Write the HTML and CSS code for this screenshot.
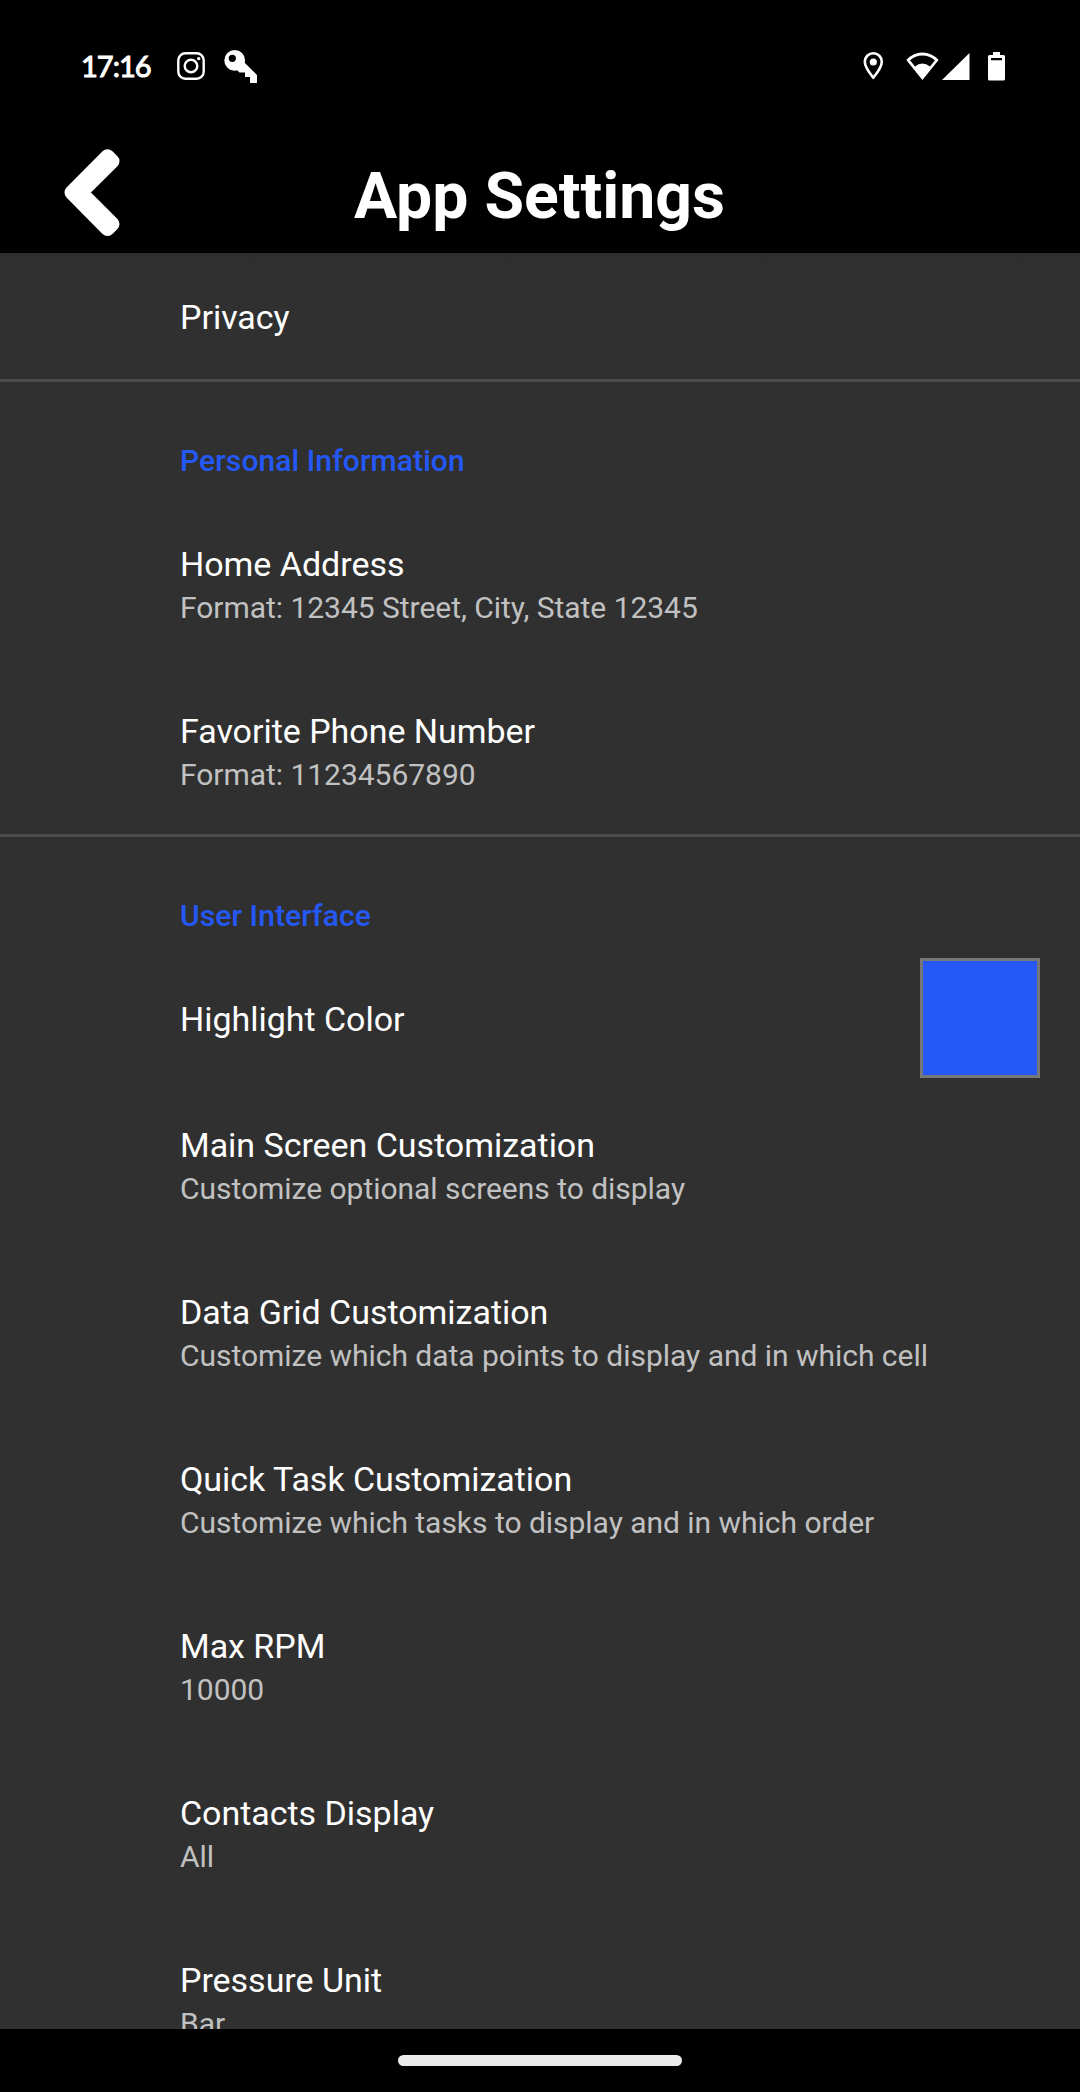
FILE: index.html
```html
<!DOCTYPE html>
<html lang="en">
<head>
<meta charset="utf-8">
<title>App Settings</title>
<link rel="stylesheet" href="styles.css">
</head>
<body>
<div class="screen">
  <div class="status">
    <span class="clock">17:16</span>
    <svg class="notifications" width="86" height="40" viewBox="0 0 86 40">
      <rect x="4.300" y="6.300" width="25.400" height="25.400" rx="7" fill="none" stroke="#fff" stroke-width="2.400"/>
      <circle cx="17" cy="19" r="6.300" fill="none" stroke="#fff" stroke-width="2.400"/>
      <circle cx="24.700" cy="11.600" r="1.700" fill="#fff"/>
      <path fill="#fff" fill-rule="evenodd" d="M60.700 3a10.400 10.400 0 1 0 0 20.800a10.400 10.400 0 1 0 0-20.800zM58.300 7.700a3.600 3.600 0 1 0 0 7.200a3.600 3.600 0 0 0 0-7.200z"/>
      <path fill="#fff" d="M69.500 14.500L83 28V36h-7v-6h-5V25.500h-5.500L61 21z"/>
    </svg>
    <svg class="system" width="146" height="40" viewBox="0 0 146 40">
      <path fill="none" stroke="#fff" stroke-width="2.600" stroke-linejoin="round" d="M13.300 6.300a8.500 8.500 0 0 0-8.500 8.500c0 5.500 8.500 16 8.500 16s8.500-10.500 8.500-16a8.500 8.500 0 0 0-8.500-8.500z"/>
      <circle cx="13.300" cy="15" r="3.600" fill="#fff"/>
      <path fill="#fff" fill-rule="evenodd" d="M46.300 13Q53 5.500 62.400 5.500T78.600 13L62.400 33zM50 13.300L55 19.500Q58.500 16.600 62.400 16.600T70 19.500L75 13.300Q69.500 8.400 62.400 8.400T50 13.300z"/>
      <path fill="#fff" d="M109.500 6V33H82z"/>
      <path fill="#fff" fill-rule="evenodd" d="M133 5h7v3h3.500q1.500 0 1.500 1.500v22.500q0 1.500-1.500 1.500h-14q-1.500 0-1.500-1.500v-22.500q0-1.500 1.500-1.500h3.500zM131 11v2.300h11V11z"/>
    </svg>
  </div>
  <header class="bar">
    <svg class="back" width="60" height="92" viewBox="62 147 60 92">
      <path fill="#fff" stroke="#fff" stroke-width="14" stroke-linejoin="round" d="M71.500 192.500L107.500 156.200L112.500 161.200L81 192.500L112.500 224L107.500 229z"/>
    </svg>
    <h1 class="heading">App Settings</h1>
  </header>
  <main class="list">
    <section class="group">
      <div class="item"><div class="title">Privacy</div></div>
    </section>
    <section class="group">
      <h2 class="category">Personal Information</h2>
      <div class="item"><div class="title">Home Address</div><div class="summary">Format: 12345 Street, City, State 12345</div></div>
      <div class="item"><div class="title">Favorite Phone Number</div><div class="summary">Format: 11234567890</div></div>
    </section>
    <section class="group">
      <h2 class="category">User Interface</h2>
      <div class="item with-swatch"><div class="title">Highlight Color</div><div class="swatch"></div></div>
      <div class="item"><div class="title">Main Screen Customization</div><div class="summary">Customize optional screens to display</div></div>
      <div class="item"><div class="title">Data Grid Customization</div><div class="summary">Customize which data points to display and in which cell</div></div>
      <div class="item"><div class="title">Quick Task Customization</div><div class="summary">Customize which tasks to display and in which order</div></div>
      <div class="item"><div class="title">Max RPM</div><div class="summary">10000</div></div>
      <div class="item"><div class="title">Contacts Display</div><div class="summary">All</div></div>
      <div class="item"><div class="title">Pressure Unit</div><div class="summary">Bar</div></div>
    </section>
  </main>
  <footer class="nav"><div class="handle"></div></footer>
</div>
</body>
</html>
```
FILE: styles.css
```css
* { box-sizing: border-box; }
body { margin: 0; background: #000; color: #fff; font-family: Roboto, sans-serif; }
.screen { width: 1080px; height: 2092px; display: flex; flex-direction: column; overflow: hidden; }

.status { height: 133px; flex: none; display: flex; align-items: flex-start; padding: 47px 74px 0 81px; }
.clock { width: 93px; font: 400 29px/38px Lato, sans-serif; letter-spacing: -1px; -webkit-text-stroke: 1px #fff; }
.system { margin-left: auto; }

.bar { height: 120px; flex: none; display: grid; grid-template-columns: 122px 1fr 122px; align-items: start; }
.back { margin: 14px 0 0 62px; }
.heading { margin: 26px 1px 0 0; font-size: 64.3px; line-height: 75px; font-weight: 700; text-align: center; }

.list { flex: 1; min-height: 0; overflow: hidden; background: linear-gradient(#2d2d2d, #303030 12px); }
.group + .group { border-top: 3px solid #4b4b4b; }
.category { margin: 0; height: 118px; padding: 61px 0 0 180px; font-size: 30px; line-height: 36px; font-weight: 500; letter-spacing: 0.08px; color: #2459f7; }
.item { padding: 44px 40px 41px 180px; }
.title { font-size: 34px; line-height: 41px; letter-spacing: -0.03px; }
.summary { padding-top: 4px; font-size: 30px; line-height: 37px; letter-spacing: -0.03px; color: #c1c1c1; }
.with-swatch { display: flex; justify-content: space-between; padding-top: 3px; padding-bottom: 3px; }
.with-swatch .title { padding-top: 41px; }
.swatch { width: 120px; height: 120px; background: #2459f7; border: 3px solid #777; }

.nav { height: 63px; flex: none; display: flex; justify-content: center; padding-top: 26px; }
.handle { width: 284px; height: 11px; border-radius: 6px; background: #ebebeb; }
```
